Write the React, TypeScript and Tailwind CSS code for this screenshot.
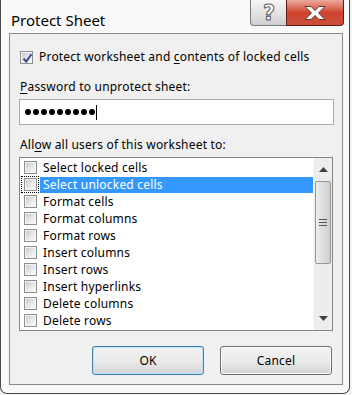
import React from "react";

const items = [
  "Select locked cells",
  "Select unlocked cells",
  "Format cells",
  "Format columns",
  "Format rows",
  "Insert columns",
  "Insert rows",
  "Insert hyperlinks",
  "Delete columns",
  "Delete rows",
];

const Box = ({ checked }: { checked?: boolean }) => (
  <span className="relative flex h-[13px] w-[13px] shrink-0 items-center justify-center border border-[#8e8f8f] bg-white">
    <span className="h-[11px] w-[11px] border border-[#f4f4f4] bg-gradient-to-br from-[#cbcbcb] via-[#e6e6e6] to-[#fbfbfb]" />
    {checked && (
      <svg className="absolute left-[1px] top-[1px]" width="11" height="11" viewBox="0 0 11 11">
        <path d="M1.5 5.5 L4.2 8.6 L9.5 1.2" fill="none" stroke="#3b4f8f" strokeWidth="2" />
      </svg>
    )}
  </span>
);

export default function App() {
  return (
    <div className="h-[395px] w-[352px] overflow-hidden bg-[#f3f3f3] font-['Noto_Sans',sans-serif] text-black">
      <div className="flex h-[394px] w-[350px] flex-col rounded-b-[7px] border border-t-0 border-[#4b4b4b] bg-[#f9f9f9] pb-[8px] pl-[8px] pr-[6px]">
        {/* title bar */}
        <div className="flex h-[33px] shrink-0 items-start">
          <div className="pl-[2px] pt-[11px] text-[15px] leading-[18px]">Protect Sheet</div>
          <div className="ml-auto mr-[-1px] flex h-[26px]">
            <div className="flex w-[36px] items-center justify-center rounded-bl-[4px] border border-t-0 border-r-0 border-[#747c87] bg-gradient-to-b from-[#f6f6f6] via-[#e4e4e4] to-[#cfcfcf]">
              <svg width="16" height="22" viewBox="0 0 16 22">
                <text x="8" y="18" textAnchor="middle" fontFamily="DejaVu Sans, sans-serif" fontWeight="bold" fontSize="21" fill="#ffffff" stroke="#5b5b5b" strokeWidth="1">?</text>
              </svg>
            </div>
            <div className="flex w-[58px] items-center justify-center rounded-br-[4px] border border-t-0 border-[#5c1f15] bg-gradient-to-b from-[#eaa99c] via-[#cf432c] to-[#c9503c]">
              <svg width="24" height="16" viewBox="0 0 24 16">
                <path d="M2 1.5 H8 L12 5.5 L16 1.5 H22 L15.5 8 L22 14.5 H16 L12 10.5 L8 14.5 H2 L8.5 8 Z" fill="#ffffff" stroke="#5b3a34" strokeWidth="1" strokeLinejoin="round" />
              </svg>
            </div>
          </div>
        </div>

        {/* client area */}
        <div className="flex flex-1 flex-col border border-[#8b8b8b] bg-[#f0f0f0] px-[9px] text-[12px] leading-[16px] tracking-[0.2px]">
          <div className="ml-[1px] mt-[15px] flex h-[16px] items-center gap-[6px]">
            <Box checked />
            <span>
              Protect worksheet and <u className="underline-offset-2">c</u>ontents of locked cells
            </span>
          </div>

          <div className="ml-[1px] mt-[14px] h-[16px]">
            <u className="underline-offset-2">P</u>assword to unprotect sheet:
          </div>

          <div className="mt-[4px] flex h-[26px] w-[315px] items-center border border-[#abadb3] bg-white pl-[5px]">
            <div className="flex gap-[2px]">
              {Array.from({ length: 9 }).map((_, i) => (
                <span key={i} className="block h-[6px] w-[6px] rounded-full bg-black" />
              ))}
            </div>
            <span className="ml-[1px] h-[15px] w-[1px] bg-black" />
          </div>

          <div className="ml-[1px] mt-[12px] h-[16px]">
            All<u className="underline-offset-2">o</u>w all users of this worksheet to:
          </div>

          <div className="mt-[4px] flex h-[174px] w-[314px] border border-[#828790] bg-white">
            <div className="flex flex-1 flex-col pt-[1px]">
              {items.map((it, i) => (
                <div key={it} className="flex h-[17px] items-center">
                  <div
                    className={`ml-[1px] flex h-[17px] w-[18px] items-center justify-center ${
                      i === 1 ? "border border-dotted border-black" : ""
                    }`}
                  >
                    <Box />
                  </div>
                  <div
                    className={`ml-[1px] flex h-[16px] flex-1 items-center pl-[3px] ${
                      i === 1 ? "bg-[#3399ff] text-white" : ""
                    }`}
                  >
                    {it}
                  </div>
                </div>
              ))}
            </div>
            {/* scrollbar */}
            <div className="flex w-[19px] flex-col border-l border-[#f5f5f5] bg-[#ededed]">
              <div className="flex h-[23px] items-center justify-center">
                <svg width="9" height="5" viewBox="0 0 9 5">
                  <path d="M0 5 L4.5 0 L9 5 Z" fill="#404040" />
                </svg>
              </div>
              <div className="mx-[1px] flex h-[83px] items-center justify-center rounded-[2px] border border-[#979797] bg-gradient-to-r from-[#eeeeee] via-[#dcdcdc] to-[#cfcfcf]">
                <div className="flex flex-col gap-[2px]">
                  <span className="block h-[1px] w-[8px] bg-[#555]" />
                  <span className="block h-[1px] w-[8px] bg-[#555]" />
                  <span className="block h-[1px] w-[8px] bg-[#555]" />
                </div>
              </div>
              <div className="flex-1" />
              <div className="flex h-[23px] items-center justify-center">
                <svg width="9" height="5" viewBox="0 0 9 5">
                  <path d="M0 0 L9 0 L4.5 5 Z" fill="#404040" />
                </svg>
              </div>
            </div>
          </div>

          <div className="mt-[15px] flex justify-end gap-[16px] pr-[1px]">
            <button className="h-[29px] w-[112px] rounded-[3px] border border-[#3c7fb1] bg-gradient-to-b from-[#f2f2f2] via-[#ebebeb] to-[#d4d4d4] shadow-[inset_0_0_0_1px_#bde3f7]">
              OK
            </button>
            <button className="h-[29px] w-[112px] rounded-[3px] border border-[#707070] bg-gradient-to-b from-[#f2f2f2] via-[#ebebeb] to-[#d4d4d4] shadow-[inset_0_0_0_1px_#fcfcfc]">
              Cancel
            </button>
          </div>
        </div>
      </div>
    </div>
  );
}
